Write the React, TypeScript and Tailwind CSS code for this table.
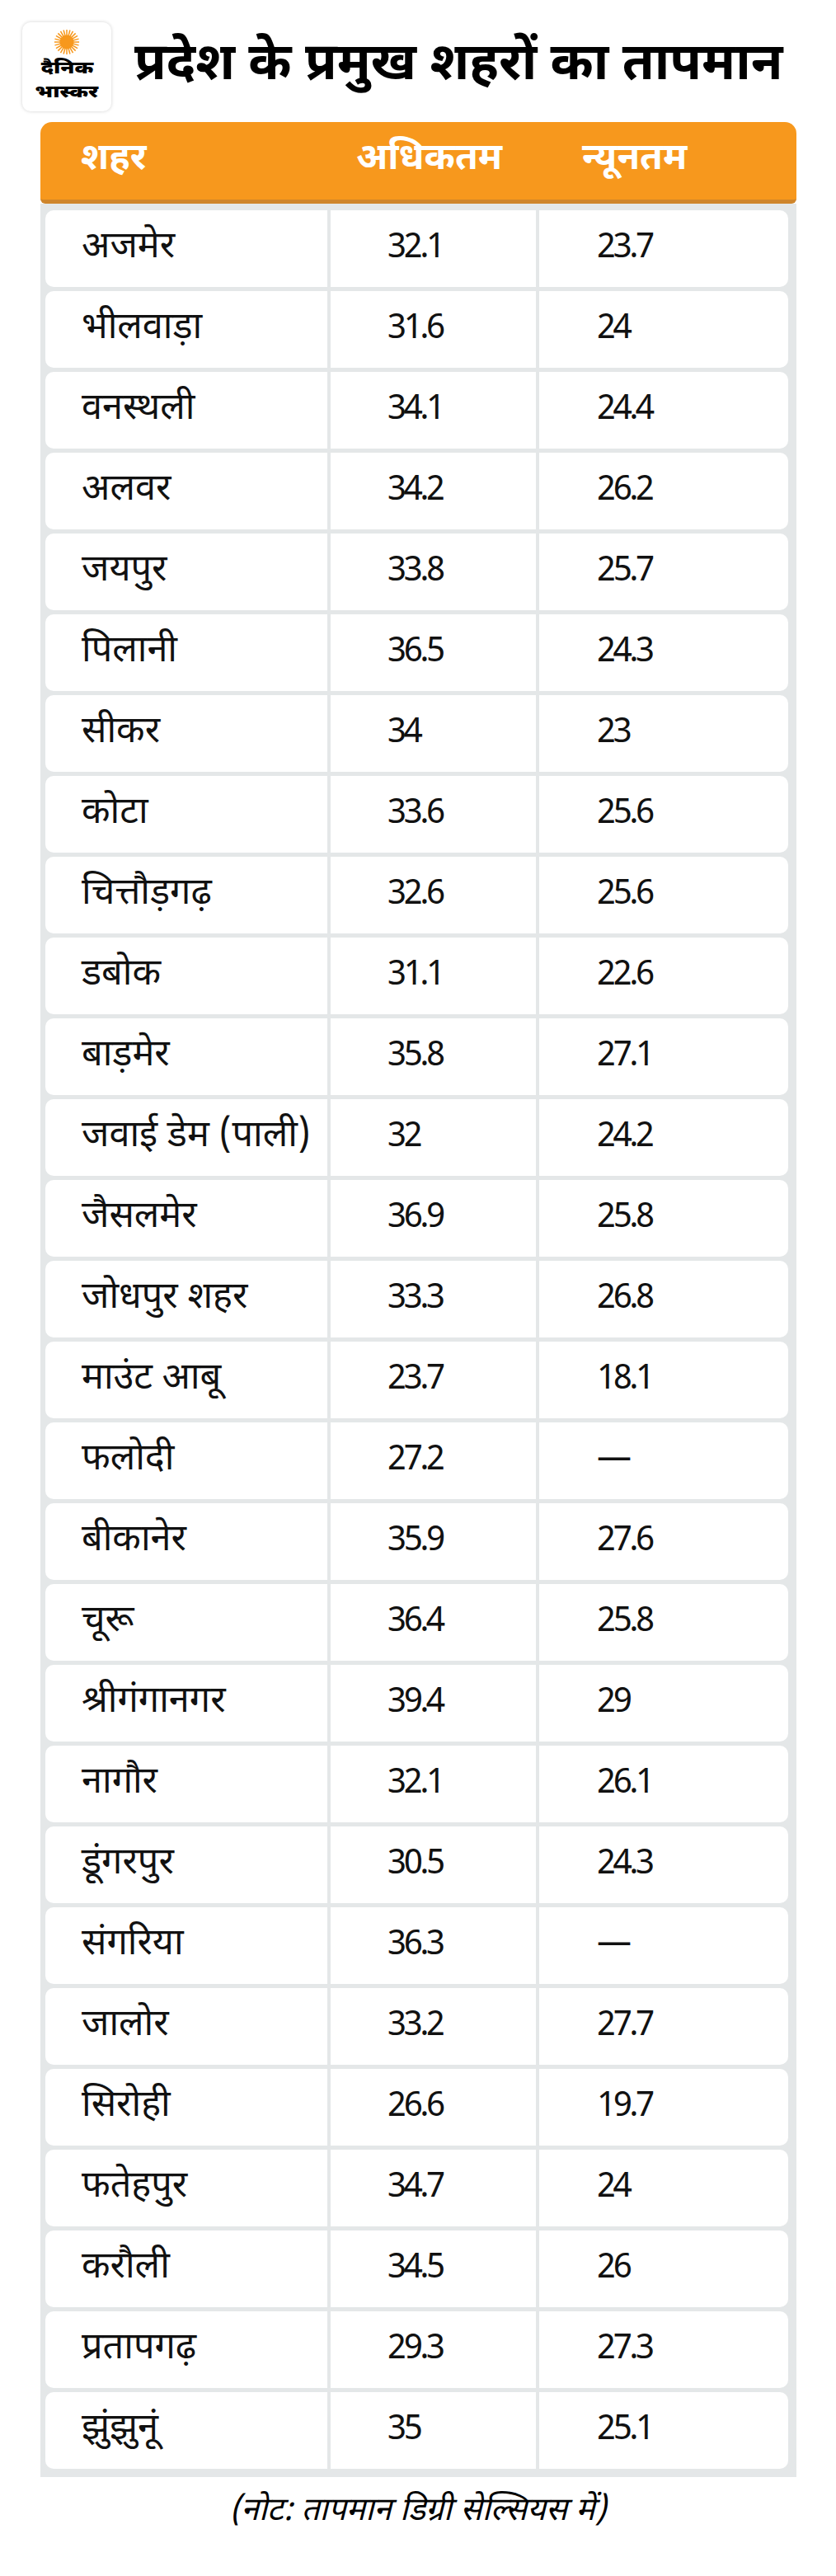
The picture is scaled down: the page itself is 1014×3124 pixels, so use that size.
const rows: [string, string, string][] = [
  ["अजमेर", "32.1", "23.7"],
  ["भीलवाड़ा", "31.6", "24"],
  ["वनस्थली", "34.1", "24.4"],
  ["अलवर", "34.2", "26.2"],
  ["जयपुर", "33.8", "25.7"],
  ["पिलानी", "36.5", "24.3"],
  ["सीकर", "34", "23"],
  ["कोटा", "33.6", "25.6"],
  ["चित्तौड़गढ़", "32.6", "25.6"],
  ["डबोक", "31.1", "22.6"],
  ["बाड़मेर", "35.8", "27.1"],
  ["जवाई डेम (पाली)", "32", "24.2"],
  ["जैसलमेर", "36.9", "25.8"],
  ["जोधपुर शहर", "33.3", "26.8"],
  ["माउंट आबू", "23.7", "18.1"],
  ["फलोदी", "27.2", "—"],
  ["बीकानेर", "35.9", "27.6"],
  ["चूरू", "36.4", "25.8"],
  ["श्रीगंगानगर", "39.4", "29"],
  ["नागौर", "32.1", "26.1"],
  ["डूंगरपुर", "30.5", "24.3"],
  ["संगरिया", "36.3", "—"],
  ["जालोर", "33.2", "27.7"],
  ["सिरोही", "26.6", "19.7"],
  ["फतेहपुर", "34.7", "24"],
  ["करौली", "34.5", "26"],
  ["प्रतापगढ़", "29.3", "27.3"],
  ["झुंझुनूं", "35", "25.1"],
];

const font = {
  fontFamily: '"Noto Sans Devanagari", "Noto Sans", "Lohit Devanagari", "FreeSans", sans-serif',
};

function Sun() {
  const rays = Array.from({ length: 24 }, (_, i) => i * 15);
  return (
    <svg width="32" height="32" viewBox="0 0 34 34">
      {rays.map((a) => (
        <line
          key={a}
          x1="17"
          y1="17"
          x2="17"
          y2="1"
          stroke="#f7981d"
          strokeWidth="1.6"
          transform={`rotate(${a} 17 17)`}
        />
      ))}
      <circle cx="17" cy="17" r="9" fill="#f7981d" />
    </svg>
  );
}

function Logo() {
  return (
    <div className="w-[108px] h-[108px] shrink-0 rounded-[10px] bg-white shadow-[0_0_4px_rgba(0,0,0,0.18)] flex flex-col items-center pt-[8px]">
      <Sun />
      <div className="mt-[3px] text-[21px] leading-[29px] font-black text-black scale-x-[1.25]">दैनिक</div>
      <div className="text-[21px] leading-[29px] font-black text-black scale-x-[1.25]">भास्कर</div>
    </div>
  );
}

function Row({ city, max, min }: { city: string; max: string; min: string }) {
  return (
    <div className="flex h-[93px] bg-white rounded-[10px] text-[#111]">
      <div className="w-[342px] pl-[44px] flex items-center text-[45px]">{city}</div>
      <div className="w-[4px] bg-[#e4e7e8]" />
      <div className="w-[249px] pl-[69px] flex items-center text-[42px] tracking-[-3.5px]">{max}</div>
      <div className="w-[4px] bg-[#e4e7e8]" />
      <div className="flex-1 pl-[70px] flex items-center text-[42px] tracking-[-3.5px]">{min}</div>
    </div>
  );
}

export default function App() {
  return (
    <div className="w-[1014px] h-[3124px] bg-white" style={font}>
      <div className="flex items-center pt-[27px] pl-[27px]">
        <Logo />
        <h1 className="ml-[28px] text-[63px] font-bold text-black leading-none whitespace-nowrap">
          प्रदेश के प्रमुख शहरों का तापमान
        </h1>
      </div>

      <div className="ml-[49px] w-[917px] mt-[13px]">
        <div className="h-[99px] bg-[#f7981d] rounded-t-[14px] rounded-b-[6px] border-b-[5px] border-[#cf852b] flex items-center text-white text-[45px] font-bold">
          <span className="w-[383px] pl-[49px]">शहर</span>
          <span className="w-[274px]">अधिकतम</span>
          <span>न्यूनतम</span>
        </div>
        <div className="bg-[#e4e7e8] pt-[8px] pb-[10px] pl-[6px] pr-[10px] flex flex-col gap-[5px]">
          {rows.map(([c, a, b]) => (
            <Row key={c} city={c} max={a} min={b} />
          ))}
        </div>
      </div>

      <p className="mt-[21px] text-center italic text-[39px] leading-[44px] text-black">
        (नोट: तापमान डिग्री सेल्सियस में)
      </p>
    </div>
  );
}
